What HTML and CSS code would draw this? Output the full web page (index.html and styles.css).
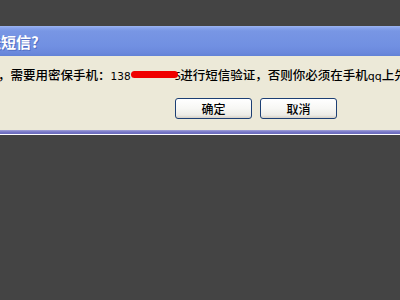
FILE: index.html
```html
<!DOCTYPE html>
<html>
<head>
<meta charset="utf-8">
<link rel="stylesheet" href="styles.css">
</head>
<body>
<div class="top"></div>
<div class="dialog">
  <div class="titlebar"><span class="title">送短信?</span></div>
  <div class="content">
    <div class="msg">，需要用密保手机：<span class="num">138</span><span class="redact"></span><span class="num last">5</span>进行短信验证，否则你必须在手机<span class="qq">qq</span>上先验证</div>
    <div class="buttons">
      <button class="btn">确定</button>
      <button class="btn">取消</button>
    </div>
  </div>
  <div class="frame"></div>
</div>
</body>
</html>
```
FILE: styles.css
```css
html, body {
  margin: 0;
  padding: 0;
  background: #444444;
  width: 400px;
  height: 300px;
  overflow: hidden;
}
.top {
  height: 26px;
}
.dialog {
  width: 400px;
}
.titlebar {
  height: 30px;
  box-sizing: border-box;
  background: linear-gradient(to bottom, #9db5f0 0px, #87a3ec 2px, #7896e4 5px, #7190e2 20px, #6a88dc 27px, #6282d6 30px);
  display: flex;
  align-items: center;
  overflow: hidden;
}
.title {
  font-family: "Noto Sans CJK SC", "Liberation Sans", sans-serif;
  font-weight: bold;
  font-size: 15px;
  color: #ffffff;
  margin-left: -14px;
  text-shadow: 1px 1px 0 #5470c4;
  white-space: nowrap;
}
.content {
  background: #ece9d8;
  height: 74px;
  box-sizing: border-box;
  padding-top: 10px;
}
.msg {
  font-family: "Noto Sans CJK SC", sans-serif;
  font-size: 12.5px;
  font-weight: 500;
  color: #000;
  white-space: nowrap;
  overflow: hidden;
  margin-left: -2px;
  height: 17px;
  line-height: 17px;
}
.num {
  font-family: "DejaVu Sans", sans-serif;
  font-size: 10.5px;
  font-weight: normal;
}
.redact {
  display: inline-block;
  width: 47px;
  height: 7px;
  background: #f00000;
  border-radius: 4px;
  vertical-align: 2px;
  margin-right: -3px;
  position: relative;
  z-index: 1;
}
.last {
  letter-spacing: -1px;
}
.qq {
  font-family: "DejaVu Sans", sans-serif;
  font-size: 11px;
  font-weight: normal;
}
.buttons {
  display: flex;
  gap: 8px;
  margin-top: 15px;
  padding-left: 175px;
}
.btn {
  width: 77px;
  height: 21px;
  box-sizing: border-box;
  border: 1px solid #1c3f74;
  border-radius: 3px;
  background: linear-gradient(to bottom, #ffffff 0%, #f7f7f4 50%, #ecebe6 85%, #d6d0c5 100%);
  font-family: "Noto Sans CJK SC", sans-serif;
  font-size: 12px;
  font-weight: 500;
  color: #000;
  padding: 0;
  line-height: 17px;
}
.frame {
  height: 5px;
  box-sizing: border-box;
  background: linear-gradient(to bottom, #a4a4dc 0px, #7676c6 2px, #6a6abd 4px, #ffffff 4px, #ffffff 5px);
}
```
